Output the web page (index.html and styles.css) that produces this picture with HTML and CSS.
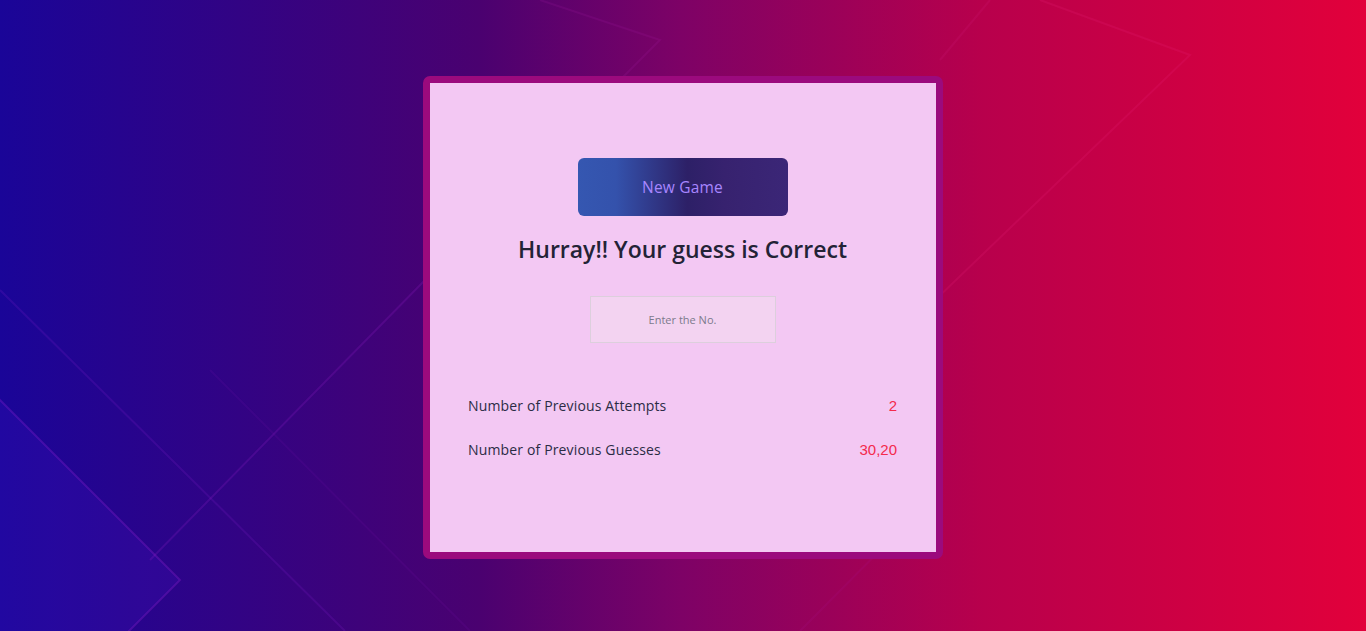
FILE: index.html
```html
<!DOCTYPE html>
<html lang="en">
<head>
<meta charset="utf-8">
<title>Guess the Number</title>
<link rel="stylesheet" href="styles.css">
</head>
<body>
<svg class="bg-deco" width="1366" height="631" viewBox="0 0 1366 631" aria-hidden="true">
  <polygon points="-100,300 180,580 60,700 -220,420" fill="rgba(90,30,230,0.12)" stroke="rgba(170,40,220,0.25)" stroke-width="2"/>
  <polyline points="0,290 345,631" fill="none" stroke="rgba(130,30,200,0.2)" stroke-width="2"/>
  <polyline points="150,560 430,275" fill="none" stroke="rgba(150,30,200,0.22)" stroke-width="2"/>
  <polyline points="210,370 470,631" fill="none" stroke="rgba(120,20,170,0.14)" stroke-width="2"/>
  <polyline points="540,0 660,40 600,100" fill="none" stroke="rgba(170,30,170,0.16)" stroke-width="2"/>
  <polyline points="1040,0 1190,55 930,305" fill="none" stroke="rgba(230,30,120,0.2)" stroke-width="2"/>
  <polyline points="990,0 940,60" fill="none" stroke="rgba(210,30,130,0.16)" stroke-width="2"/>
  <polyline points="940,490 800,631" fill="none" stroke="rgba(170,20,140,0.16)" stroke-width="2"/>
</svg>
<main class="card">
  <div class="card-inner">
    <button class="new-game" type="button">New Game</button>
    <h1 class="message">Hurray!! Your guess is Correct</h1>
    <input class="guess-input" type="text" placeholder="Enter the No.">
    <div class="stats">
      <div class="stat-row">
        <span class="stat-label">Number of Previous Attempts</span>
        <span class="stat-value">2</span>
      </div>
      <div class="stat-row">
        <span class="stat-label">Number of Previous Guesses</span>
        <span class="stat-value">30,20</span>
      </div>
    </div>
  </div>
</main>
</body>
</html>
```
FILE: styles.css
```css
* { box-sizing: border-box; }

html, body {
  margin: 0;
  height: 631px;
  overflow: hidden;
}

body {
  position: relative;
  background: linear-gradient(to right, #1a0598 0%, #4a0170 35%, #7e0266 50%, #b8004c 72%, #e2003b 100%);
  font-family: "Open Sans", "Noto Sans", sans-serif;
  display: flex;
  justify-content: center;
  align-items: flex-start;
  padding-top: 76px;
}

.bg-deco {
  position: absolute;
  left: 0;
  top: 0;
  pointer-events: none;
}

.card {
  position: relative;
  width: 520px;
  height: 483px;
  border: 7px solid #9b0a7d;
  border-radius: 7px;
  background: #9b0a7d;
}

.card-inner {
  width: 100%;
  height: 100%;
  background: #f3c8f3;
  display: flex;
  flex-direction: column;
  align-items: center;
  padding: 75px 39px 0 38px;
}

.new-game {
  width: 210px;
  height: 58px;
  border: none;
  border-radius: 6px;
  background: linear-gradient(to right, #3557b1 0%, #3452ac 18%, #2d2067 52%, #37226f 70%, #3b2677 100%);
  color: #a886ff;
  font-family: "Open Sans", sans-serif;
  font-size: 15.5px;
  letter-spacing: 0.2px;
  padding: 0;
}

.message {
  margin: 20px 0 0;
  font-size: 23px;
  font-weight: 600;
  line-height: 26px;
  color: #232336;
  letter-spacing: 0;
}

.guess-input {
  margin-top: 34px;
  width: 186px;
  height: 47px;
  border: 1px solid #dccfdc;
  background: #f3d3f1;
  text-align: center;
  font-family: "Open Sans", sans-serif;
  font-size: 11px;
  color: #333;
  outline: none;
}

.guess-input::placeholder {
  color: #7c7a8c;
}

.stats {
  width: 100%;
  margin-top: 52px;
  display: flex;
  flex-direction: column;
  gap: 24px;
}

.stat-row {
  display: flex;
  justify-content: space-between;
  align-items: center;
  height: 20px;
}

.stat-label {
  font-size: 14px;
  letter-spacing: 0.15px;
  color: #2b2c45;
}

.stat-value {
  font-family: "Liberation Sans", Arial, sans-serif;
  font-size: 15px;
  color: #f42a4c;
}
```
